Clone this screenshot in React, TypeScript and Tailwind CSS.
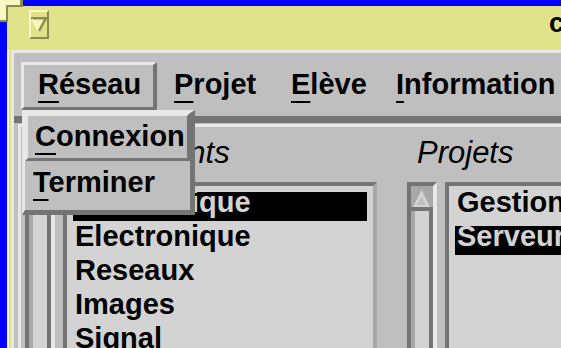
import React from "react";

const leftItems = ["Informatique", "Electronique", "Reseaux", "Images", "Signal"];
const rightItems = ["Gestion des notes", "Serveur Web"];

const Corner = () => (
  <svg className="absolute left-0 top-0" width="23" height="22" viewBox="0 0 23 22">
    <rect x="0" y="0" width="21" height="6" fill="#f8f8c4" />
    <rect x="0" y="0" width="7" height="21" fill="#f8f8c4" />
    <rect x="20" y="0" width="3" height="7" fill="#8c8c52" />
    <rect x="6" y="5" width="17" height="2" fill="#8c8c52" />
    <rect x="6" y="5" width="2" height="17" fill="#8c8c52" />
    <rect x="0" y="20" width="8" height="2" fill="#8c8c52" />
  </svg>
);

const MenuButton = () => (
  <div className="ml-[22px] mt-[4px] flex h-[29px] w-[31px] items-center justify-center border-2 border-t-[#f8f8c8] border-l-[#f8f8c8] border-b-[#8c8c52] border-r-[#8c8c52]">
    <svg width="16" height="15" viewBox="0 0 16 15">
      <polygon points="1,1 15,1 8,14" fill="#f4f4bc" />
      <rect x="0" y="0" width="16" height="2.5" fill="#8c8c52" />
      <line x1="15" y1="1" x2="8" y2="14" stroke="#8c8c52" strokeWidth="2.5" />
      <line x1="1" y1="2" x2="7" y2="13" stroke="#fbfbd4" strokeWidth="1.5" />
    </svg>
  </div>
);

const Mn = ({ c }: { c: string }) => (
  <span className="underline decoration-2 underline-offset-[7px]">{c}</span>
);

const Scrollbar = () => (
  <div className="flex h-[200px] w-[30px] shrink-0 flex-col border-l-[4px] border-t-[4px] border-r-[4px] border-l-[#747474] border-t-[#747474] border-r-[#e8e8e8] bg-[#a8a8a8]">
    <svg width="22" height="25" viewBox="0 0 22 25">
      <polygon points="10.5,4 19,21 2,21" fill="#d3d3d3" />
      <polygon points="10.5,10 15,19 6,19" fill="#bfbfbf" />
      <rect x="0" y="21" width="22" height="4" fill="#747474" />
    </svg>
    <div className="ml-[4px] flex-1 border-r-[4px] border-[#747474] bg-[#d3d3d3]" />
  </div>
);

const List = ({ items, selected }: { items: string[]; selected: number }) => (
  <div className="h-[200px] w-[314px] shrink-0 border-l-[4px] border-t-[4px] border-r-[4px] border-l-[#747474] border-t-[#747474] border-r-[#a8a8a8] bg-[#d3d3d3] px-[6px] pt-[6px] text-[29px] font-bold">
    {items.map((it, i) => (
      <div key={it} className="h-[34px]">
        <div
          className={
            i === selected
              ? "h-[29px] whitespace-nowrap bg-black pl-[2px] leading-[20px] text-[#d3d3d3]"
              : "h-[29px] whitespace-nowrap pl-[2px] leading-[20px]"
          }
        >
          {it}
        </div>
      </div>
    ))}
  </div>
);

const Panel = ({ label, items, selected }: { label: string; items: string[]; selected: number }) => (
  <div className="flex w-[352px] shrink-0 flex-col">
    <div className="mt-[10px] h-[32px] whitespace-nowrap pl-[10px] text-[31px] italic leading-[32px]">{label}</div>
    <div className="mt-[13px] flex gap-[8px]">
      <Scrollbar />
      <List items={items} selected={selected} />
    </div>
  </div>
);

const PopupMenu = () => (
  <div className="absolute left-[22px] top-[110px] flex h-[105px] w-[173px] flex-col border-l-[3px] border-t-[3px] border-b-[5px] border-r-[5px] border-l-[#e8e8e8] border-t-[#e8e8e8] border-b-[#747474] border-r-[#747474] bg-[#bfbfbf] text-[29px] font-bold">
    <div className="flex h-[48px] items-center border-[3px] border-l-[#e8e8e8] border-t-[#e8e8e8] border-b-[#747474] border-r-[#747474] pl-[7px]">
      <span>
        <Mn c="C" />
        onnexion
      </span>
    </div>
    <div className="flex h-[49px] items-center pb-[5px] pl-[8px]">
      <span>
        <Mn c="T" />
        erminer
      </span>
    </div>
  </div>
);

export default function App() {
  return (
    <div className="relative h-[348px] w-[561px] overflow-hidden bg-[#0000ff] font-['Liberation_Sans',Arial,sans-serif] text-black">
      <div className="ml-[7px] mt-[6px] flex h-[342px] w-[554px] flex-col bg-[#e1e38b]">
        <div className="flex h-[44px] shrink-0 items-start overflow-hidden">
          <MenuButton />
          <span className="ml-[500px] mt-[1px] whitespace-nowrap text-[27px] font-bold leading-[32px]">client</span>
        </div>
        <div className="flex min-h-0 flex-1">
          <div className="w-[4px] shrink-0 border-l-2 border-[#f6f6c8]" />
          <div className="flex min-w-0 flex-1 flex-col overflow-hidden border-l-[3px] border-t-[3px] border-[#e8e8e8] bg-[#bfbfbf]">
            <div className="flex h-[63px] shrink-0 items-start pl-[7px] pt-[9px] text-[29px] font-bold">
              <div className="flex h-[48px] w-[136px] shrink-0 items-center border-b-[3px] border-l-[3px] border-r-[4px] border-t-[3px] border-b-[#747474] border-l-[#e8e8e8] border-r-[#747474] border-t-[#e8e8e8] pb-[2px] pl-[14px]">
                <span>
                  <Mn c="R" />
                  éseau
                </span>
              </div>
              <div className="flex h-[48px] w-[117px] shrink-0 items-center pb-[2px] pl-[17px]">
                <span>
                  <Mn c="P" />
                  rojet
                </span>
              </div>
              <div className="flex h-[48px] w-[105px] shrink-0 items-center pb-[2px] pl-[17px]">
                <span>
                  <Mn c="E" />
                  lève
                </span>
              </div>
              <div className="flex h-[48px] shrink-0 items-center whitespace-nowrap pb-[2px] pl-[17px]">
                <span>
                  <Mn c="I" />
                  nformation
                </span>
              </div>
            </div>
            <div className="h-[7px] shrink-0 bg-[#747474]" />
            <div className="ml-[4px] mt-[1px] flex min-h-0 flex-1 gap-[30px] overflow-hidden border-l-[3px] border-t-[3px] border-[#e8e8e8] pl-[4px]">
              <Panel label="Départements" items={leftItems} selected={0} />
              <Panel label="Projets" items={rightItems} selected={1} />
            </div>
          </div>
        </div>
      </div>
      <Corner />
      <PopupMenu />
    </div>
  );
}
